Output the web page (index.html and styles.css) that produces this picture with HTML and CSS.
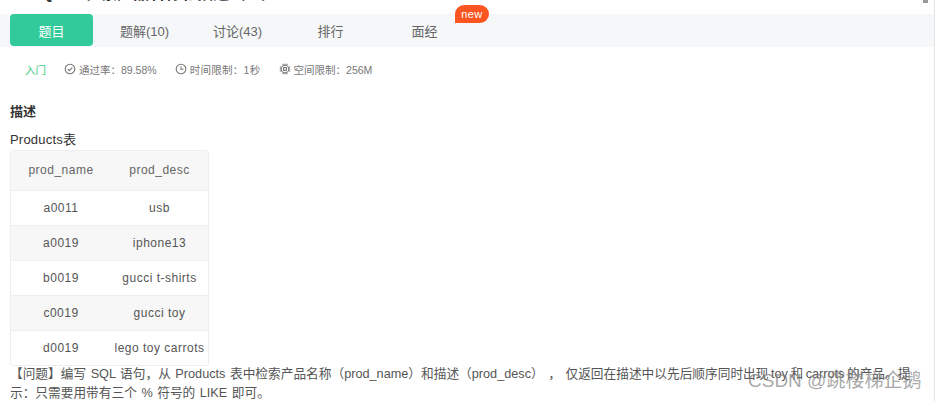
FILE: index.html
```html
<!DOCTYPE html>
<html lang="zh-CN">
<head>
<meta charset="utf-8">
<title>题目</title>
<link rel="stylesheet" href="styles.css">
</head>
<body>
<div class="page">
  <header class="title-strip">
    <h1 class="title">SQL42 检索产品名称和描述（二）</h1>
    <span class="title-mark"></span>
  </header>
  <nav class="tabs">
    <a class="tab tab-active">题目</a>
    <a class="tab">题解(10)</a>
    <a class="tab">讨论(43)</a>
    <a class="tab">排行</a>
    <a class="tab tab-new">面经<span class="badge">new</span></a>
  </nav>
  <div class="meta">
    <span class="level">入门</span>
    <span class="meta-item">
      <svg class="icon" viewBox="0 0 12 12"><circle cx="6" cy="6" r="4.8"/><path d="M3.8 6.2 5.4 7.7 8.3 4.6"/></svg>
      通过率：89.58%
    </span>
    <span class="meta-item meta-time">
      <svg class="icon" viewBox="0 0 12 12"><circle cx="6" cy="6" r="4.8"/><path d="M6 3.2V6.3H8.6"/></svg>
      时间限制：1秒
    </span>
    <span class="meta-item">
      <svg class="icon" viewBox="0 0 12 12"><circle cx="6" cy="6" r="3.8"/><rect x="4.6" y="4.6" width="2.8" height="2.8"/><path d="M4 .8V2M6 .8V2M8 .8V2M4 10V11.2M6 10V11.2M8 10V11.2M.8 4H2M.8 6H2M.8 8H2M10 4H11.2M10 6H11.2M10 8H11.2"/></svg>
      空间限制：256M
    </span>
  </div>
  <main class="content">
    <h2 class="section-title">描述</h2>
    <p class="table-label">Products表</p>
    <div class="table-wrap">
      <table class="data">
        <thead>
          <tr><th>prod_name</th><th>prod_desc</th></tr>
        </thead>
        <tbody>
          <tr><td>a0011</td><td>usb</td></tr>
          <tr><td>a0019</td><td>iphone13</td></tr>
          <tr><td>b0019</td><td>gucci t-shirts</td></tr>
          <tr><td>c0019</td><td>gucci toy</td></tr>
          <tr><td>d0019</td><td>lego toy carrots</td></tr>
        </tbody>
      </table>
    </div>
    <p class="question">【问题】编写 SQL 语句，从 Products 表中检索产品名称（prod_name）和描述（prod_desc） ， 仅返回在描述中以先后顺序同时出现<span class="q-tight"> toy 和 carrots 的产品。提</span>示：只需要用带有三个 % 符号的 LIKE 即可。</p>
  </main>
  <div class="watermark">CSDN @跳楼梯企鹅</div>
</div>
</body>
</html>
```
FILE: styles.css
```css
* { box-sizing: border-box; }
html, body { margin: 0; padding: 0; background: #fff; overflow: hidden; }
body { font-family: "Liberation Sans", "Noto Sans CJK SC", sans-serif; color: #333; }
.page { position: relative; width: 935px; height: 401px; overflow: hidden; border-right: 1px solid #e4e4e4; }

.title-strip { height: 14px; padding-left: 30px; padding-right: 6px; display: flex; justify-content: space-between; align-items: flex-start; overflow: hidden; }
.title { margin: -16px 0 0; font-size: 16px; line-height: 20px; font-weight: 700; color: #333; flex: none; white-space: nowrap; }
.title-mark { width: 5px; height: 3px; background: #999; }

.tabs { height: 33px; background: #f5f7f9; padding-left: 10px; display: flex; gap: 10px; }
.tab { width: 83px; height: 32px; display: flex; align-items: center; justify-content: center; font-size: 13px; color: #666; position: relative; border-radius: 4px; }
.tab-active { background: #32ca99; color: #fff; }
.tab-new { padding-left: 2px; }
.badge { position: absolute; left: 73px; top: -9px; width: 34px; height: 18px; background: #fc5522; color: #fff; font-size: 11px; letter-spacing: .4px; display: flex; align-items: center; justify-content: center; border-radius: 9px 9px 9px 0; }

.meta { height: 46px; padding: 0 0 2px 25px; display: flex; align-items: center; font-size: 10.5px; color: #777; }
.level { color: #32ca79; width: 39px; }
.meta-item { display: flex; align-items: center; gap: 3px; margin-right: 18px; }
.meta-time { letter-spacing: .3px; }
.icon { width: 12px; height: 12px; fill: none; stroke: #777; stroke-width: 1.1; }

.content { padding: 0 10px; }
.section-title { margin: 9px 0 0; font-size: 13px; line-height: 20px; font-weight: 700; color: #333; }
.table-label { margin: 8px 0 0; font-size: 13px; line-height: 20px; color: #333; letter-spacing: .2px; }
.table-wrap { width: 199px; height: 216px; border: 1px solid #eee; border-radius: 3px; overflow: hidden; }
.data { width: 197px; border-collapse: collapse; table-layout: fixed; font-size: 12px; letter-spacing: .5px; color: #555; text-align: center; }
.data th { height: 39px; font-weight: 400; background: #f7f7f7; border-bottom: 1px solid #eee; color: #666; padding: 0; }
.data td { height: 35px; padding: 0; border-bottom: 1px solid #eee; white-space: nowrap; }
.data tr:nth-child(even) td { background: #f7f7f7; }
.data tr:last-child td { border-bottom: 0; }
.data th:first-child, .data td:first-child { width: 100px; }

.question { margin: -1px 0 0; font-size: 12.7px; line-height: 19px; word-spacing: 1px; color: #555; width: 905px; }
.q-tight { word-spacing: -1px; }

.watermark { position: absolute; left: 748px; top: 368px; font-size: 19px; line-height: 26px; color: rgba(125,125,125,.68); white-space: nowrap; }
```
